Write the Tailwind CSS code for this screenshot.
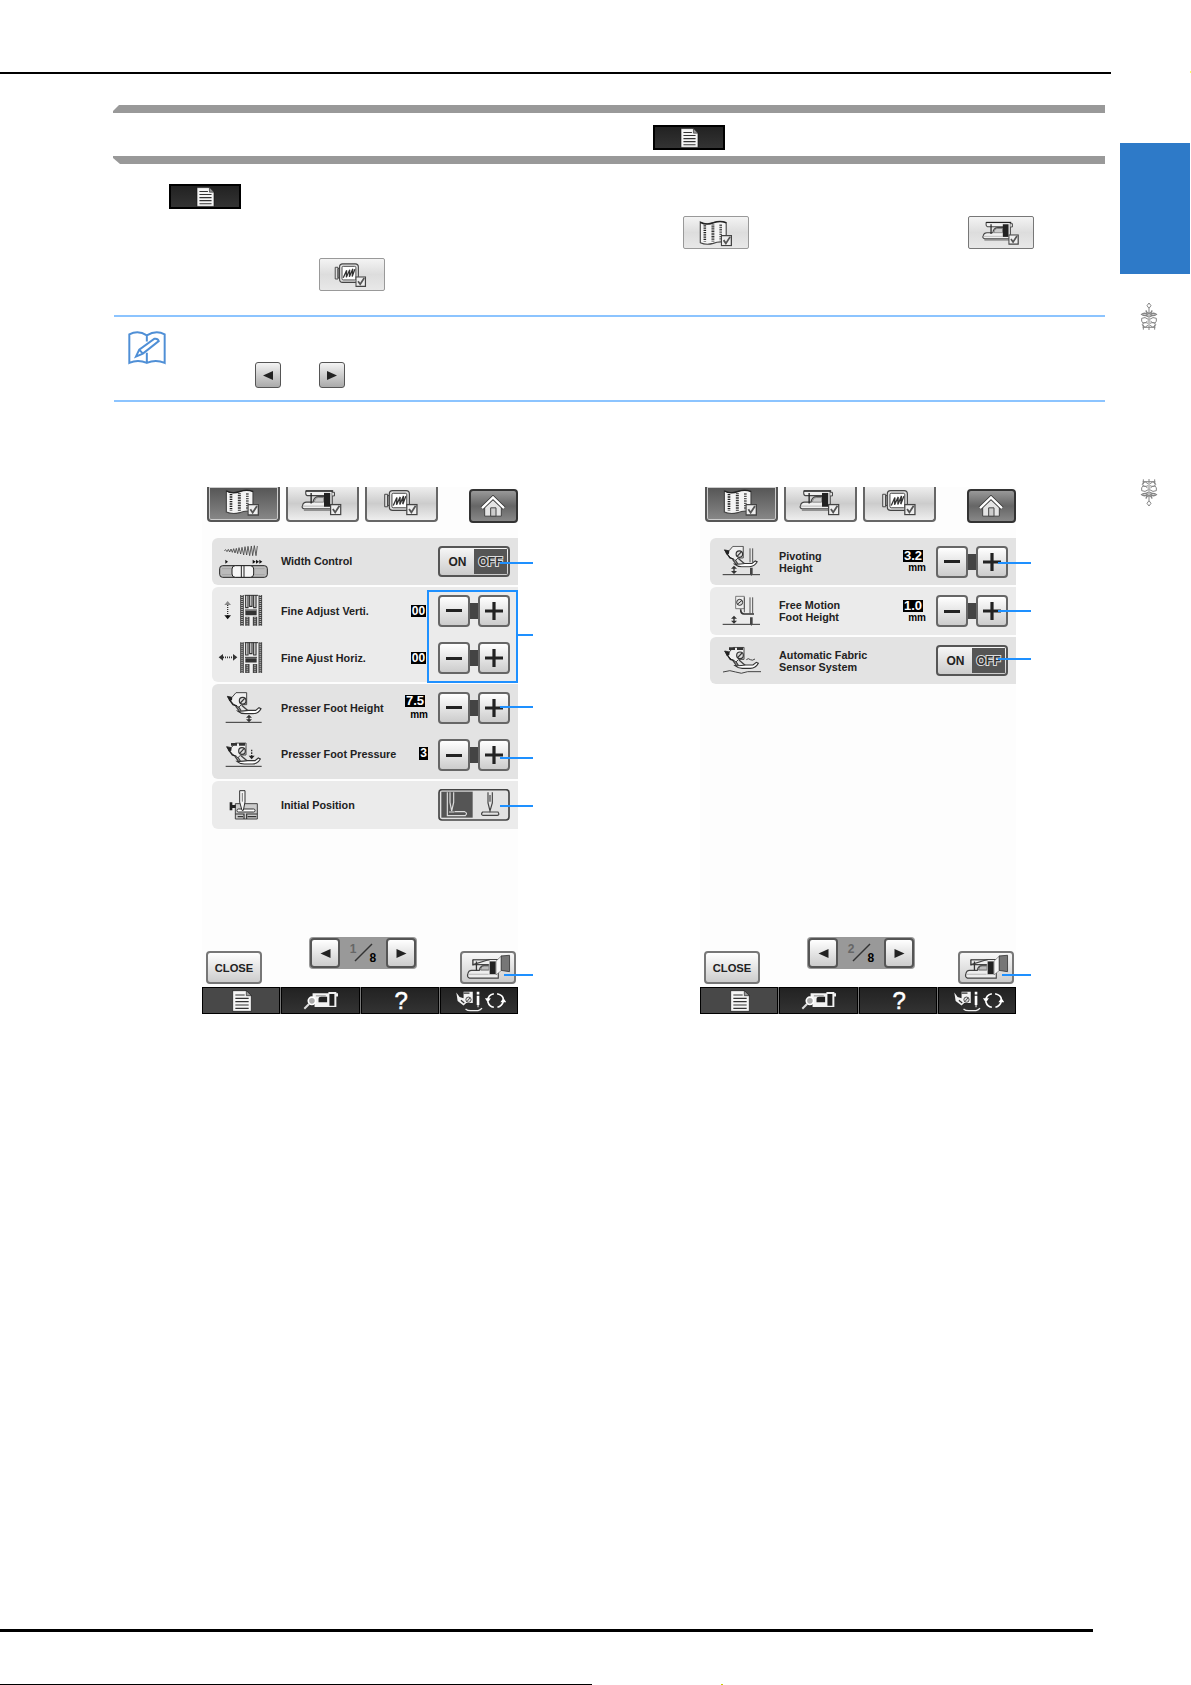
<!DOCTYPE html>
<html lang="en">
<head>
<meta charset="utf-8">
<title>Settings screen</title>
<script src="https://cdn.jsdelivr.net/npm/@tailwindcss/browser@4"></script>
</head>
<body class="bg-white font-['Liberation_Sans',sans-serif] text-black">
<svg class="hidden" aria-hidden="true">
  <symbol id="check" viewBox="0 0 36 36"><path d="M2 2h31v31H2z" fill="#eee" stroke="#444" stroke-width="4"/><path d="M9 16l7 10 13-20" fill="none" stroke="#555" stroke-width="5.5"/></symbol>
  <symbol id="book" viewBox="90 26 105 84">
    <path d="M94 34q18 10 40 2t40 0v62q-20-6-40 2-22 6-40-2z" fill="#f4f4f4" stroke="#444" stroke-width="3.5"/>
    <path d="M94 35q18 10 40 2t40 0" fill="none" stroke="#222" stroke-width="4"/>
    <path d="M108 44v50" stroke="#222" stroke-width="8" stroke-dasharray="4 3"/>
    <path d="M133 42v52" stroke="#333" stroke-width="9" stroke-dasharray="3 2"/>
    <path d="M157 42v50" stroke="#555" stroke-width="8" stroke-dasharray="4 3"/>
    <use href="#check" x="157" y="74" width="36" height="36"/>
  </symbol>
  <symbol id="machine" viewBox="316 30 126 82">
    <path d="M386 36h24v54h-86q-8-3-4-10 2-10 12-10h20q2-16 16-16h16v-4h-50q-6-1-4-14z" fill="#f0f0f0" stroke="#444" stroke-width="3.5"/>
    <path d="M356 70q1-14 12-14h16v14z" fill="#ccc" stroke="#777" stroke-width="2.5"/>
    <path d="M330 36h83" stroke="#222" stroke-width="4"/><path d="M346 42v32" stroke="#222" stroke-width="4"/>
    <path d="M385 42h19v42h-19z" fill="#222"/><path d="M410 40h7v11h-7" fill="#ddd" stroke="#444" stroke-width="3"/><path d="M321 82h64" stroke="#999" stroke-width="2"/><path d="M324 94h82" stroke="#777" stroke-width="4"/>
    <use href="#check" x="403" y="75" width="36" height="36"/>
  </symbol>
  <symbol id="hoop" viewBox="560 30 107 82">
    <path d="M564 46h9v38h-9zM573 50h5v30h-5z" fill="#ddd" stroke="#444" stroke-width="3"/>
    <rect x="578" y="35" width="61" height="60" rx="10" fill="#ddd" stroke="#444" stroke-width="3.5"/>
    <rect x="586" y="43" width="45" height="44" rx="4" fill="#fff" stroke="#444" stroke-width="3"/>
    <path d="M590 80l11-24-1 22 11-24-1 23 11-26-2 25 9-24" fill="none" stroke="#333" stroke-width="4"/>
    <use href="#check" x="629" y="75" width="36" height="36"/>
  </symbol>
  <symbol id="home" viewBox="856 44 78 68">
    <path d="M870 107V78l25-24 25 24v29z" fill="#e4e4e4" stroke="#444" stroke-width="3"/>
    <path d="M862 83l33-32 33 32" fill="none" stroke="#333" stroke-width="12"/>
    <path d="M862 83l33-32 33 32" fill="none" stroke="#fff" stroke-width="7"/>
    <path d="M888 107V82h16v25z" fill="#ccc" stroke="#444" stroke-width="3"/>
  </symbol>
  <symbol id="doc" viewBox="0 0 60 66">
    <path d="M2 2h41l15 15v47H2z" fill="#f5f5f5" stroke="#111" stroke-width="2"/><path d="M43 2v15h15z" fill="#999" stroke="#222" stroke-width="2"/>
    <path d="M10 15h28M10 25h40M10 35h40M10 45h40M10 55h40" stroke="#333" stroke-width="3.5"/>
  </symbol>
  <symbol id="detail" viewBox="320 208 115 68">
    <path d="M352 220h48v-4h24v4h5v10h-5v32h-66v-14h-6z" fill="#f2f2f2"/>
    <path d="M370 247v-9q0-7 8-7h18v16zM403 222h15v36h-15z" fill="#222"/><path d="M362 228h30" stroke="#555" stroke-width="2"/>
    <circle cx="350" cy="243" r="11" fill="#aaa" stroke="#fff" stroke-width="5"/><path d="M342 252l-15 15" stroke="#ddd" stroke-width="6"/>
  </symbol>
  <symbol id="footinfo" viewBox="780 206 155 72">
    <path d="M784 216l4 26 18 14 8-8h20v-34h-28v20l-12-4z" fill="#f2f2f2"/><path d="M806 218h18M798 240l10 8" stroke="#333" stroke-width="4"/>
    <circle cx="821" cy="238" r="8" fill="#ddd" stroke="#333" stroke-width="2.5"/><path d="M816 244l10-12" stroke="#333" stroke-width="2.5"/>
    <path d="M812 266q7 6 18 5h20q8-1 12-7" fill="none" stroke="#eee" stroke-width="4"/>
    <path d="M850 214v8M850 226v28" stroke="#fff" stroke-width="8"/><path d="M850 254v7" stroke="#fff" stroke-width="3"/>
    <path d="M898 220q-18 4-18 20M908 220q18 4 19 17M880 245q4 14 18 16M927 243q-4 15-18 18" fill="none" stroke="#fff" stroke-width="5"/>
    <path d="M871 234h18l-9 13zM918 246h18l-9-13z" fill="#fff"/>
  </symbol>
  <symbol id="screen" viewBox="808 100 140 84">
    <path d="M882 117h28v58h-90q-8-3-5-12 2-12 12-12h24q2-14 14-14h16v-4h-50z" fill="#eee" stroke="#444" stroke-width="3.5"/>
    <path d="M855 150q1-13 12-13h14v13z" fill="#bbb" stroke="#666" stroke-width="3"/>
    <path d="M830 118h54" stroke="#444" stroke-width="4"/><path d="M831 118v18M842 123v28" stroke="#333" stroke-width="4"/>
    <path d="M818 163h62" stroke="#999" stroke-width="2"/>
    <path d="M882 122h21v42h-21z" fill="#222" stroke="#eee" stroke-width="2"/>
    <path d="M903 122l17-16v45l-17 14z" fill="#f5f5f5" stroke="#666" stroke-width="2"/>
    <path d="M919 106l26-2v51l-26-4z" fill="#777" stroke="#333" stroke-width="2.5"/>
  </symbol>
  <symbol id="plate" viewBox="133 43 70 99">
    <path d="M137 46h63v91h-63z" fill="#eee"/>
    <path d="M141 46v92M196 46v92" stroke="#444" stroke-width="11"/><path d="M141 46v92M196 46v92" stroke="#bbb" stroke-width="5" stroke-dasharray="3 3"/>
    <path d="M152 46v38h7V46M164 46v34h7V46M176 46v38h7V46" fill="none" stroke="#333" stroke-width="3.5"/><path d="M149 47h40M150 91h36" stroke="#333" stroke-width="3"/>
    <path d="M151 100h34" stroke="#333" stroke-width="13"/>
    <path d="M157 111v27M180 111v27" stroke="#444" stroke-width="13"/><path d="M157 113v25M180 113v25" stroke="#bbb" stroke-width="5" stroke-dasharray="3 3"/>
  </symbol>
  <symbol id="presser" viewBox="90 36 112 68">
    <path d="M97 49l14 3 12-14h32v36h-16l-8 8-14-8-10-10z" fill="#f0f0f0" stroke="#444" stroke-width="3"/>
    <path d="M96 49l16 3-1 9-8 2z" fill="#222"/><path d="M104 60l10 14 12 4" fill="none" stroke="#222" stroke-width="4"/>
    <circle cx="143" cy="62" r="10" fill="#ddd" stroke="#333" stroke-width="3.5"/><path d="M136 69l13-14" stroke="#333" stroke-width="3.5"/>
    <path d="M122 78l10 14M140 76l20 17M130 80l8 12" stroke="#444" stroke-width="4"/>
    <path d="M128 93q9 8 22 8h24q16 0 24-15l-6-3-10 8h-22q-18 3-32 2z" fill="#fff" stroke="#333" stroke-width="3.5"/>
  </symbol>
  <symbol id="flourish" viewBox="0 0 54 84">
    <g fill="none" stroke="#858585" stroke-width="3">
      <path d="M27 3l6 8-6 8-6-8zM27 19v65"/>
      <path d="M27 34q-8-1-9-9M27 34q8-1 9-9M23 39q-8-10-20-1M31 39q8-10 20-1M25 44q-9-5-18-4M29 44q9-5 18-4" stroke-width="4"/>
      <path d="M25 52q-10-9-20-3-2 10 4 14 10 1 14-7M29 52q10-9 20-3 2 10-4 14-10 1-14-7M24 64q-12-6-17 3 1 9 9 8l8-5M30 64q12-6 17 3-1 9-9 8l-8-5M10 68v15M44 68v15M8 76h38"/>
    </g>
  </symbol>
  <symbol id="position" viewBox="729 327 216 96"><rect x="732" y="329" width="210" height="91" rx="9" fill="#e2e2e2" stroke="#444" stroke-width="5"/><path d="M739 335h94v78h-94z" fill="#555"/><g fill="none" stroke="#ddd" stroke-width="3.5"><path d="M757 337v70h54q8-8-2-12h-30M765 337v30l5 26 6-26v-30M762 396h16"/></g><g fill="none" stroke="#444" stroke-width="3.5"><path d="M879 337v32l6 24 7-24v-32M885 345v20M863 396h46q6 9-2 10h-44q-7-3 0-10z"/></g></symbol>
</svg>

<div class="relative flex h-[1685px] w-[1191px] overflow-hidden">
  <main class="w-[1111px] shrink-0 pt-[72px]">
    <div class="h-[2px] bg-black"></div>
    <div class="mt-[31px] ml-[113px] w-[992px]">
      <!-- section heading -->
      <div class="h-2 bg-[#999] [clip-path:polygon(6px_0,100%_0,100%_100%,0_100%,0_6px)]"></div>
      <div class="flex h-[43px] pt-3 pl-[540px]">
        <div class="flex h-[25px] w-[72px] items-center justify-center border-2 border-black bg-linear-to-b from-[#222] to-[#333]"><svg class="h-5 w-[19px]"><use href="#doc"/></svg></div>
      </div>
      <div class="h-2 bg-[#999] [clip-path:polygon(0_0,100%_0,100%_100%,7px_100%,0_2px)]"></div>

      <div class="mt-5 ml-14 flex h-[25px] w-[72px] items-center justify-center border-2 border-black bg-linear-to-b from-[#222] to-[#333]"><svg class="h-5 w-[19px]"><use href="#doc"/></svg></div>
      <div class="mt-[7px] flex gap-[219px] pl-[570px]">
        <div class="flex h-[33px] w-[66px] items-center justify-center rounded-xs border border-[#999] bg-linear-to-b from-[#f4f4f4] via-[#ddd] to-[#e8e8e8]"><svg class="h-7 w-[34px]"><use href="#book"/></svg></div>
        <div class="flex h-[33px] w-[66px] items-center justify-center rounded-xs border border-[#777] bg-linear-to-b from-[#f4f4f4] via-[#ddd] to-[#e8e8e8]"><svg class="h-7 w-[38px]" ><use href="#machine"/></svg></div>
      </div>
      <div class="mt-[9px] ml-[206px] flex h-[33px] w-[66px] items-center justify-center rounded-xs border border-[#999] bg-linear-to-b from-[#f4f4f4] via-[#ddd] to-[#e8e8e8]"><svg class="mr-1 h-[26px] w-[33px]"><use href="#hoop"/></svg></div>

      <!-- note box -->
      <section class="mt-6 ml-px flex h-[87px] border-y-2 border-[#8cc4ff] pt-[14px] pl-[14px]">
        <svg class="h-[34px] w-[38px]" viewBox="84 812 115 102" fill="none" stroke="#4f8fd6" stroke-width="6"><path d="M88 822q27-14 53 3 28-17 54-3v86q-27-12-54 0-27-12-53 0zM141 825v18M141 877v30"/><path d="M108 889l10-21 46-33q10-2 13 7l-48 38zM118 868l11 12"/></svg>
        <div class="mt-[31px] ml-[89px] flex gap-[38px]">
          <div class="flex size-[26px] items-center justify-center rounded-[3px] border border-[#555] bg-linear-to-b from-[#f4f4f4] to-[#aaa]"><svg class="h-[9px] w-[10px]" viewBox="0 0 10 9"><path d="M0 4.5L10 0v9z" fill="#222"/></svg></div>
          <div class="flex size-[26px] items-center justify-center rounded-[3px] border border-[#555] bg-linear-to-b from-[#f4f4f4] to-[#aaa]"><svg class="h-[9px] w-[10px]" viewBox="0 0 10 9"><path d="M10 4.5L0 0v9z" fill="#222"/></svg></div>
        </div>
      </section>
    </div>

    <div class="mt-[85px] ml-[202px] flex gap-[182px]">
      <!-- page 1 of 8 -->
      <section class="relative flex h-[527px] w-[316px] shrink-0 flex-col bg-[#fdfdfd]">
        <div class="flex h-[51px] gap-[6px] pl-[4.5px]">
          <div class="h-[35px] w-[73px] rounded-b border-2 border-t-0 border-[#555] bg-linear-to-b from-[#555] to-[#888] pt-px pl-4 shadow-[inset_0_0_0_1px_#ccc]"><svg class="h-7 w-[35px]"><use href="#book"/></svg></div>
          <div class="h-[35px] w-[73px] rounded-b border-2 border-t-0 border-[#666] bg-linear-to-b from-[#eee] via-[#ccc] to-[#eee] pt-[2px] pl-[13px]"><svg class="h-[27px] w-[42px]"><use href="#machine"/></svg></div>
          <div class="h-[35px] w-[73px] rounded-b border-2 border-t-0 border-[#666] bg-linear-to-b from-[#eee] via-[#ccc] to-[#eee] pt-[2px] pl-4"><svg class="h-[27px] w-9"><use href="#hoop"/></svg></div>
          <div class="mt-[2px] ml-[25px] flex h-[34px] w-[49px] items-center justify-center rounded border-2 border-[#333] bg-linear-to-b from-[#999] via-[#666] to-[#888]"><svg class="h-[23px] w-[26px]"><use href="#home"/></svg></div>
        </div>
        <div class="ml-[10px] flex flex-col gap-[2px] text-[10.8px] font-bold text-[#222]">
          <div class="flex h-[47px] items-center rounded-l-md bg-[#e3e3e3] pr-[8px]">
            <svg class="h-[47px] w-[69px]" viewBox="51 174 207 141">
              <path d="M88 212l4-3 4 6 4-7 4 8 4-9 4 10 4-11 4 13 4-14 4 16 4-18 5 19 4-20 5 23 4-25 5 25 4-26 5 28 5-29 4 29 5-30 5 30 4-29" fill="none" stroke="#444" stroke-width="2.5"/>
              <path d="M91 239v12l8-6zM173 239v12l9-6zM183 239v12l9-6zM193 239v12l9-6z" fill="#111"/>
              <rect x="74" y="257" width="143" height="35" rx="9" fill="#bbb" stroke="#222" stroke-width="3"/><path d="M81 266h128M81 284h128" stroke="#999" stroke-width="2"/><rect x="111" y="257" width="65" height="35" rx="10" fill="#f6f6f6" stroke="#222" stroke-width="3"/><path d="M139 258v33M147 258v33" stroke="#222" stroke-width="3"/>
            </svg>
            <span class="flex-1">Width Control</span>
            <div class="flex h-[31px] w-[72px] rounded border-2 border-[#555] bg-linear-to-b from-[#f6f6f6] to-[#ccc] p-px text-[12px] leading-[26px]"><span class="w-[33px] text-center">ON</span><span class="flex-1 bg-[#555] text-center text-[#333] [-webkit-text-stroke:2px_#ddd] [paint-order:stroke_fill]">OFF</span></div>
          </div>
          <div class="rounded-l-md bg-[#ebebeb]">
            <div class="flex h-[47.5px] items-center pr-[8px]">
              <svg class="h-12 w-[69px]" viewBox="51 22 207 144"><path d="M98 70v45" stroke="#333" stroke-width="4" stroke-dasharray="3 3"/><path d="M88 76l10-12 10 12z" fill="#888"/><path d="M88 107l10 12 10-12z" fill="#111"/><use href="#plate" x="133" y="43" width="70" height="99"/></svg>
              <span class="flex-1">Fine Adjust Verti.</span><span class="mr-3 h-[12px] w-[15px] bg-black text-center text-[12px] leading-[12px] text-white">00</span>
              <div class="flex items-center"><b class="flex size-8 items-center justify-center rounded border-2 border-[#666] bg-linear-to-b from-white to-[#ccc]"><i class="h-[3px] w-4 bg-[#222]"></i></b><i class="h-4 w-2 bg-[#444]"></i><b class="flex size-8 items-center justify-center rounded border-2 border-[#666] bg-linear-to-b from-white to-[#ccc]"><svg class="size-[18px]" viewBox="0 0 18 18"><path d="M9 0v18M0 9h18" stroke="#222" stroke-width="3.2"/></svg></b></div>
            </div>
            <div class="flex h-[47.5px] items-center pr-[8px]">
              <svg class="h-12 w-[69px]" viewBox="51 166 207 144"><path d="M78 236h43" stroke="#333" stroke-width="5" stroke-dasharray="3 3"/><path d="M84 226l-13 10 13 10zM114 226l13 10-13 10z" fill="#333"/><use href="#plate" x="133" y="188" width="70" height="99"/></svg>
              <span class="flex-1">Fine Ajust Horiz.</span><span class="mr-3 h-[12px] w-[15px] bg-black text-center text-[12px] leading-[12px] text-white">00</span>
              <div class="flex items-center"><b class="flex size-8 items-center justify-center rounded border-2 border-[#666] bg-linear-to-b from-white to-[#ccc]"><i class="h-[3px] w-4 bg-[#222]"></i></b><i class="h-4 w-2 bg-[#444]"></i><b class="flex size-8 items-center justify-center rounded border-2 border-[#666] bg-linear-to-b from-white to-[#ccc]"><svg class="size-[18px]" viewBox="0 0 18 18"><path d="M9 0v18M0 9h18" stroke="#222" stroke-width="3.2"/></svg></b></div>
            </div>
          </div>
          <div class="rounded-l-md bg-[#e3e3e3]">
            <div class="flex h-[47.5px] items-center pr-[8px]">
              <svg class="h-12 w-[69px]" viewBox="51 12 207 144"><use href="#presser" x="90" y="36" width="112" height="68"/><path d="M92 127h108" stroke="#333" stroke-width="3"/><path d="M162 108v14" stroke="#333" stroke-width="4"/><path d="M153 113l9-9 9 9zM153 118l9 9 9-9z" fill="#333"/></svg>
              <span class="flex-1">Presser Foot Height</span><span class="mr-[10px] flex flex-col items-end"><span class="mr-[3px] h-[12px] w-5 bg-black text-center text-[13px] leading-[12px] text-white">7.5</span><span class="mt-[3px] h-[10px] text-[10px] leading-[10px] text-black">mm</span></span>
              <div class="flex items-center"><b class="flex size-8 items-center justify-center rounded border-2 border-[#666] bg-linear-to-b from-white to-[#ccc]"><i class="h-[3px] w-4 bg-[#222]"></i></b><i class="h-4 w-2 bg-[#444]"></i><b class="flex size-8 items-center justify-center rounded border-2 border-[#666] bg-linear-to-b from-white to-[#ccc]"><svg class="size-[18px]" viewBox="0 0 18 18"><path d="M9 0v18M0 9h18" stroke="#222" stroke-width="3.2"/></svg></b></div>
            </div>
            <div class="flex h-[47.5px] items-center pr-[8px]">
              <svg class="h-12 w-[69px]" viewBox="51 156 207 144"><use href="#presser" x="88" y="190" width="112" height="68"/><path d="M108 196h18M132 196h18" stroke="#333" stroke-width="8"/><path d="M92 262h108" stroke="#333" stroke-width="3"/><path d="M170 212v20" stroke="#333" stroke-width="4" stroke-dasharray="5 3"/><path d="M161 230l9 11 9-11z" fill="#222"/></svg>
              <span class="mb-[3px] flex-1">Presser Foot Pressure</span><span class="mr-[10px] mb-[3px] h-[13px] w-[9px] bg-black text-center text-[12px] leading-[13px] text-white">3</span>
              <div class="flex items-center"><b class="flex size-8 items-center justify-center rounded border-2 border-[#666] bg-linear-to-b from-white to-[#ccc]"><i class="h-[3px] w-4 bg-[#222]"></i></b><i class="h-4 w-2 bg-[#444]"></i><b class="flex size-8 items-center justify-center rounded border-2 border-[#666] bg-linear-to-b from-white to-[#ccc]"><svg class="size-[18px]" viewBox="0 0 18 18"><path d="M9 0v18M0 9h18" stroke="#222" stroke-width="3.2"/></svg></b></div>
            </div>
          </div>
          <div class="flex h-12 items-center rounded-l-md bg-[#ebebeb] pr-[8px]">
            <svg class="h-12 w-[69px]" viewBox="51 304 207 144"><path d="M121 372h66v46h-66z" fill="#ccc" stroke="#444" stroke-width="3"/><path d="M104 368h8v24h-8zM112 376h10v9h-10z" fill="#222"/><path d="M121 403h26v15M155 418v-15h32M128 411h16M158 411h26" fill="none" stroke="#333" stroke-width="3.5"/><rect x="126" y="388" width="54" height="9" rx="4" fill="#fff" stroke="#333" stroke-width="3"/><path d="M134 333h16v34l-5 25h-4l-7-25z" fill="#f5f5f5" stroke="#333" stroke-width="3"/><path d="M142 340v26" stroke="#777" stroke-width="3"/></svg>
            <span class="flex-1">Initial Position</span>
            <svg class="h-8 w-[72px]"><use href="#position"/></svg>
          </div>
        </div>
        <!-- page controls -->
        <div class="mt-auto flex items-start pl-1">
          <div class="mt-[14px] flex h-[33px] w-14 items-center justify-center rounded border-2 border-[#777] bg-linear-to-b from-white to-[#ccc] pt-px text-[11.2px] font-bold text-[#222]">CLOSE</div>
          <div class="ml-[47px] flex h-8 w-[108px] items-center justify-between rounded bg-[#999] px-px">
            <div class="flex size-[30px] items-center justify-center rounded border-2 border-[#555] bg-linear-to-b from-white to-[#ccc]"><svg class="h-[9px] w-[11px]" viewBox="0 0 10 9"><path d="M0 4.5L10 0v9z" fill="#222"/></svg></div>
            <div class="flex h-5 text-[12px] leading-3 font-bold"><span class="text-[#666]">1</span><svg class="-mx-[3px] h-[19px] w-[19px]"><path d="M1 18L18 1" stroke="#333" stroke-width="1.5"/></svg><span class="pt-[9px]">8</span></div>
            <div class="flex size-[30px] items-center justify-center rounded border-2 border-[#555] bg-linear-to-b from-white to-[#ccc]"><svg class="h-[9px] w-[11px]" viewBox="0 0 10 9"><path d="M10 4.5L0 0v9z" fill="#222"/></svg></div>
          </div>
          <div class="mt-[14px] ml-[43px] flex h-[33px] w-[56px] items-center justify-center rounded border-2 border-[#777] bg-linear-to-b from-[#f8f8f8] to-[#ccc]"><svg class="h-[27px] w-[46px]"><use href="#screen"/></svg></div>
        </div>
        <div class="mt-[3px] grid h-[27px] grid-cols-4 gap-px bg-[#777]">
          <div class="flex items-center justify-center border border-black bg-[#484848] pl-0.5"><svg class="h-[22px] w-5"><use href="#doc"/></svg></div>
          <div class="flex items-center justify-center border border-black bg-linear-to-b from-[#222] to-[#333] pl-0.5"><svg class="h-[23px] w-[38px]"><use href="#detail"/></svg></div>
          <div class="flex items-center justify-center border border-black bg-linear-to-b from-[#222] to-[#333] pl-[3px] text-[24px] leading-none text-white [-webkit-text-stroke:0.5px_#fff]">?</div>
          <div class="flex items-center justify-center border border-black bg-linear-to-b from-[#222] to-[#333] pl-1"><svg class="h-6 w-[51px]"><use href="#footinfo"/></svg></div>
        </div>
        <!-- callout lines -->
        <div class="absolute top-[103px] left-[225px] h-[93px] w-[91px] border-2 border-[#1e90ff]"></div>
        <i class="absolute top-[75px] left-[298px] h-[2px] w-[33px] bg-[#1e90ff]"></i>
        <i class="absolute top-[147px] left-[315px] h-[2px] w-4 bg-[#1e90ff]"></i>
        <i class="absolute top-[219px] left-[298px] h-[2px] w-[33px] bg-[#1e90ff]"></i>
        <i class="absolute top-[270px] left-[298px] h-[2px] w-[33px] bg-[#1e90ff]"></i>
        <i class="absolute top-[318px] left-[298px] h-[2px] w-[33px] bg-[#1e90ff]"></i>
        <i class="absolute top-[487px] left-[302px] h-[2px] w-[29px] bg-[#1e90ff]"></i>
      </section>

      <!-- page 2 of 8 -->
      <section class="relative flex h-[527px] w-[316px] shrink-0 flex-col bg-[#fdfdfd]">
        <div class="flex h-[51px] gap-[6px] pl-[4.5px]">
          <div class="h-[35px] w-[73px] rounded-b border-2 border-t-0 border-[#555] bg-linear-to-b from-[#555] to-[#888] pt-px pl-4 shadow-[inset_0_0_0_1px_#ccc]"><svg class="h-7 w-[35px]"><use href="#book"/></svg></div>
          <div class="h-[35px] w-[73px] rounded-b border-2 border-t-0 border-[#666] bg-linear-to-b from-[#eee] via-[#ccc] to-[#eee] pt-[2px] pl-[13px]"><svg class="h-[27px] w-[42px]"><use href="#machine"/></svg></div>
          <div class="h-[35px] w-[73px] rounded-b border-2 border-t-0 border-[#666] bg-linear-to-b from-[#eee] via-[#ccc] to-[#eee] pt-[2px] pl-4"><svg class="h-[27px] w-9"><use href="#hoop"/></svg></div>
          <div class="mt-[2px] ml-[25px] flex h-[34px] w-[49px] items-center justify-center rounded border-2 border-[#333] bg-linear-to-b from-[#999] via-[#666] to-[#888]"><svg class="h-[23px] w-[26px]"><use href="#home"/></svg></div>
        </div>
        <div class="ml-[10px] flex flex-col gap-[2px] text-[10.8px] leading-[12px] font-bold text-[#222]">
          <div class="flex h-[47px] items-center rounded-l-md bg-[#e3e3e3] pr-[8px]">
            <svg class="h-[47px] w-[69px]" viewBox="45 174 207 141"><path d="M165 205v42M173 205v42" stroke="#555" stroke-width="3"/><use href="#presser" x="80" y="197" width="112" height="66"/><path d="M83 284h112" stroke="#333" stroke-width="3"/><path d="M117 262v15" stroke="#333" stroke-width="4"/><path d="M108 266l9-9 9 9zM108 273l9 9 9-9z" fill="#333"/><path d="M165 263h8v18l-4 7-4-7z" fill="#444"/></svg>
            <span class="flex-1">Pivoting<br>Height</span><span class="mr-[10px] flex flex-col items-end"><span class="mr-[3px] h-[12px] w-5 bg-black text-center text-[13px] leading-[12px] text-white">3.2</span><span class="mt-px h-[10px] text-[10px] leading-[10px] text-black">mm</span></span>
            <div class="flex items-center"><b class="flex size-8 items-center justify-center rounded border-2 border-[#666] bg-linear-to-b from-white to-[#ccc]"><i class="h-[3px] w-4 bg-[#222]"></i></b><i class="h-4 w-2 bg-[#444]"></i><b class="flex size-8 items-center justify-center rounded border-2 border-[#666] bg-linear-to-b from-white to-[#ccc]"><svg class="size-[18px]" viewBox="0 0 18 18"><path d="M9 0v18M0 9h18" stroke="#222" stroke-width="3.2"/></svg></b></div>
          </div>
          <div class="flex h-12 items-center rounded-l-md bg-[#ebebeb] pr-[8px]">
            <svg class="h-12 w-[69px]" viewBox="45 321 207 144"><path d="M122 349h26v37h-26z" fill="#eee" stroke="#666" stroke-width="2.5"/><circle cx="134" cy="367" r="9" fill="#ddd" stroke="#333" stroke-width="3"/><path d="M127 373l14-12" stroke="#333" stroke-width="3"/><path d="M137 388q0 14 10 14h30" fill="none" stroke="#333" stroke-width="5"/><path d="M148 352v45M165 352v50M173 352v50" stroke="#555" stroke-width="3"/><path d="M83 433h112" stroke="#333" stroke-width="3"/><path d="M117 412v15" stroke="#333" stroke-width="4"/><path d="M108 416l9-9 9 9zM108 422l9 9 9-9z" fill="#333"/><path d="M165 412h8v19l-4 7-4-7z" fill="#444"/></svg>
            <span class="flex-1">Free Motion<br>Foot Height</span><span class="mr-[10px] flex flex-col items-end"><span class="mr-[3px] h-[12px] w-5 bg-black text-center text-[13px] leading-[12px] text-white">1.0</span><span class="mt-px h-[10px] text-[10px] leading-[10px] text-black">mm</span></span>
            <div class="flex items-center"><b class="flex size-8 items-center justify-center rounded border-2 border-[#666] bg-linear-to-b from-white to-[#ccc]"><i class="h-[3px] w-4 bg-[#222]"></i></b><i class="h-4 w-2 bg-[#444]"></i><b class="flex size-8 items-center justify-center rounded border-2 border-[#666] bg-linear-to-b from-white to-[#ccc]"><svg class="size-[18px]" viewBox="0 0 18 18"><path d="M9 0v18M0 9h18" stroke="#222" stroke-width="3.2"/></svg></b></div>
          </div>
          <div class="flex h-[47px] items-center rounded-l-md bg-[#e3e3e3] pr-[8px]">
            <svg class="h-[47px] w-[69px]" viewBox="45 471 207 141"><use href="#presser" x="82" y="500" width="112" height="68"/><path d="M102 506h18M126 506h18" stroke="#333" stroke-width="8"/><path d="M84 576q22-8 38 0t36-1h40M154 539q6-6 12 0 6 4 14-2" fill="none" stroke="#444" stroke-width="3"/></svg>
            <span class="flex-1">Automatic Fabric<br>Sensor System</span>
            <div class="flex h-[31px] w-[72px] rounded border-2 border-[#555] bg-linear-to-b from-[#f6f6f6] to-[#ccc] p-px text-[12px] leading-[26px]"><span class="w-[33px] text-center">ON</span><span class="flex-1 bg-[#555] text-center text-[#333] [-webkit-text-stroke:2px_#ddd] [paint-order:stroke_fill]">OFF</span></div>
          </div>
        </div>
        <div class="mt-auto flex items-start pl-1">
          <div class="mt-[14px] flex h-[33px] w-14 items-center justify-center rounded border-2 border-[#777] bg-linear-to-b from-white to-[#ccc] pt-px text-[11.2px] font-bold text-[#222]">CLOSE</div>
          <div class="ml-[47px] flex h-8 w-[108px] items-center justify-between rounded bg-[#999] px-px">
            <div class="flex size-[30px] items-center justify-center rounded border-2 border-[#555] bg-linear-to-b from-white to-[#ccc]"><svg class="h-[9px] w-[11px]" viewBox="0 0 10 9"><path d="M0 4.5L10 0v9z" fill="#222"/></svg></div>
            <div class="flex h-5 text-[12px] leading-3 font-bold"><span class="text-[#666]">2</span><svg class="-mx-[3px] h-[19px] w-[19px]"><path d="M1 18L18 1" stroke="#333" stroke-width="1.5"/></svg><span class="pt-[9px]">8</span></div>
            <div class="flex size-[30px] items-center justify-center rounded border-2 border-[#555] bg-linear-to-b from-white to-[#ccc]"><svg class="h-[9px] w-[11px]" viewBox="0 0 10 9"><path d="M10 4.5L0 0v9z" fill="#222"/></svg></div>
          </div>
          <div class="mt-[14px] ml-[43px] flex h-[33px] w-[56px] items-center justify-center rounded border-2 border-[#777] bg-linear-to-b from-[#f8f8f8] to-[#ccc]"><svg class="h-[27px] w-[46px]"><use href="#screen"/></svg></div>
        </div>
        <div class="mt-[3px] grid h-[27px] grid-cols-4 gap-px bg-[#777]">
          <div class="flex items-center justify-center border border-black bg-[#484848] pl-0.5"><svg class="h-[22px] w-5"><use href="#doc"/></svg></div>
          <div class="flex items-center justify-center border border-black bg-linear-to-b from-[#222] to-[#333] pl-0.5"><svg class="h-[23px] w-[38px]"><use href="#detail"/></svg></div>
          <div class="flex items-center justify-center border border-black bg-linear-to-b from-[#222] to-[#333] pl-[3px] text-[24px] leading-none text-white [-webkit-text-stroke:0.5px_#fff]">?</div>
          <div class="flex items-center justify-center border border-black bg-linear-to-b from-[#222] to-[#333] pl-1"><svg class="h-6 w-[51px]"><use href="#footinfo"/></svg></div>
        </div>
        <i class="absolute top-[75px] left-[298px] h-[2px] w-[33px] bg-[#1e90ff]"></i>
        <i class="absolute top-[123px] left-[298px] h-[2px] w-[33px] bg-[#1e90ff]"></i>
        <i class="absolute top-[171px] left-[298px] h-[2px] w-[33px] bg-[#1e90ff]"></i>
        <i class="absolute top-[487px] left-[302px] h-[2px] w-[29px] bg-[#1e90ff]"></i>
      </section>
    </div>
    <div class="mt-[615px] h-[3px] w-[1093px] bg-black"></div>
    <div class="mt-[52px] flex h-px"><i class="w-[592px] bg-black"></i><i class="ml-[129px] w-[2px] bg-[#cc0]"></i></div>
  </main>

  <!-- chapter tab -->
  <aside class="flex flex-col pt-[143px] pl-[9px]">
    <div class="h-[131px] w-[70px] bg-[#2e7ac8]"></div>
    <svg class="mt-7 ml-5 h-7 w-[18px]"><use href="#flourish"/></svg>
    <svg class="mt-[149px] ml-5 h-7 w-[18px] rotate-180"><use href="#flourish"/></svg>
  </aside>
  <i class="absolute top-[71px] right-0 h-[2px] w-px bg-[#ff6]"></i>
</div>
</body>
</html>
